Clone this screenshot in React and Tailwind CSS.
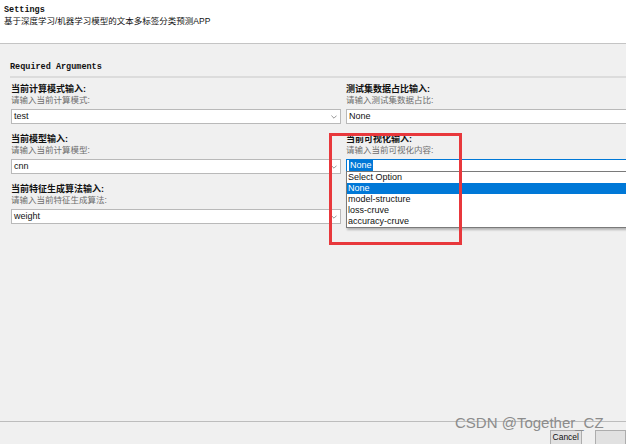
const cjk = "font-['Liberation_Sans','Noto_Sans_CJK_SC',sans-serif]";

const Chevron = () => (
  <svg width="6" height="4" viewBox="0 0 6 4" className="absolute right-[3px] top-[5px]">
    <path d="M0.4 0.6 L3 3.2 L5.6 0.6" fill="none" stroke="#8a8a8a" strokeWidth="0.9" />
  </svg>
);

const Field = ({ label, help, value, select, focused, children }) => (
  <div className="flex flex-col h-[50px]">
    <div className={`${cjk} text-[9px] leading-[11px] font-bold text-[#111]`}>{label}</div>
    <div className={`${cjk} text-[8.5px] leading-[11px] text-[#6d6d6d]`}>{help}</div>
    <div
      className={`relative mt-[3px] h-[15px] bg-white border ${
        focused ? "border-[#0078d7]" : "border-[#b9b9b9]"
      } pl-[2px] flex items-center`}
    >
      {focused ? (
        <span className="font-['Liberation_Sans',sans-serif] text-[9px] leading-[11px] bg-[#0078d7] text-white px-[1px]">
          {value}
        </span>
      ) : (
        <span className="font-['Liberation_Sans',sans-serif] text-[9px] leading-[11px] text-[#111]">{value}</span>
      )}
      {select && <Chevron />}
    </div>
    {children}
  </div>
);

const options = ["Select Option", "None", "model-structure", "loss-cruve", "accuracy-cruve"];

export default function App() {
  return (
    <div className="relative w-[626px] h-[444px] bg-[#f0f0f0] overflow-hidden">
      <div className="h-[44px] bg-white border-b border-[#c4c4c4] px-[4px] pt-[5px]">
        <div className="font-['Liberation_Mono',monospace] font-bold text-[8.5px] leading-[11px] text-[#111]">Settings</div>
        <div className={`${cjk} text-[8.5px] leading-[11px] text-[#111]`}>基于深度学习/机器学习模型的文本多标签分类预测APP</div>
      </div>

      <div className="pl-[10px] pt-[18px]">
        <div className="font-['Liberation_Mono',monospace] font-bold text-[8.5px] leading-[10px] text-[#111] pb-[4px] border-b-2 border-[#dcdcdc]">
          Required Arguments
        </div>
        <div className="flex gap-[5px] pt-[6px] pl-[1px]">
          <div className="w-[330px] shrink-0 flex flex-col">
            <Field label="当前计算模式输入:" help="请输入当前计算模式:" value="test" select />
            <Field label="当前模型输入:" help="请输入当前计算模型:" value="cnn" select />
            <Field label="当前特征生成算法输入:" help="请输入当前特征生成算法:" value="weight" select />
          </div>
          <div className="w-[300px] shrink-0 flex flex-col">
            <Field label="测试集数据占比输入:" help="请输入测试集数据占比:" value="None" />
            <Field label="当前可视化输入:" help="请输入当前可视化内容:" value="None" focused>
              <div className="relative z-10 -mt-[1px] bg-white border border-[#7a7a7a] shadow-[1px_2px_2px_rgba(0,0,0,0.25)] flex flex-col">
                {options.map((o) => (
                  <div
                    key={o}
                    className={`font-['Liberation_Sans',sans-serif] text-[9px] leading-[11px] pl-[1px] ${
                      o === "None" ? "bg-[#0078d7] text-white" : "text-[#111]"
                    }`}
                  >
                    {o}
                  </div>
                ))}
              </div>
            </Field>
          </div>
        </div>
      </div>

      <div className="absolute left-[329px] top-[133px] w-[133px] h-[112px] border-[3px] border-[#e8383c] z-20" />

      <div className="absolute left-0 right-0 top-[421px] border-t border-[#bdbdbd] h-[23px] flex gap-[13px] pl-[550px] pt-[8px]">
        <div className="w-[56px] h-[20px] bg-[#e1e1e1] border border-[#adadad] flex justify-center">
          <span className="font-['Liberation_Sans',sans-serif] text-[8.5px] leading-[12px] text-[#111]">Cancel</span>
        </div>
        <div className="w-[56px] h-[20px] bg-[#e1e1e1] border border-[#adadad]" />
      </div>

      <div className="absolute left-[455px] top-[414px] font-['Liberation_Sans',sans-serif] text-[15px] leading-[18px] text-[#8c8c8c] z-30">
        CSDN @Together_CZ
      </div>
    </div>
  );
}
